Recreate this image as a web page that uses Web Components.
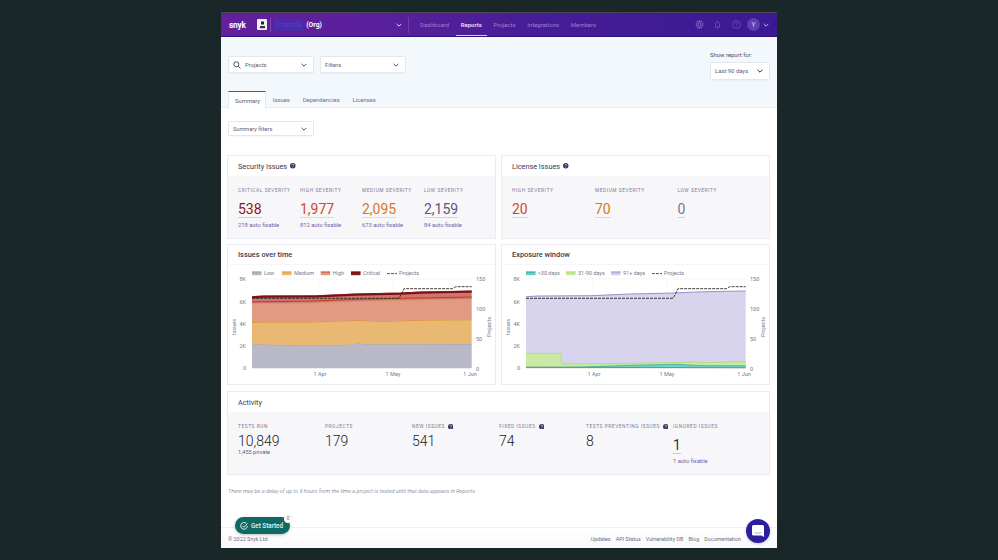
<!DOCTYPE html>
<html lang="en">
<head>
<meta charset="utf-8">
<title>Reports</title>
<style>
html,body{margin:0;height:560px;overflow:hidden;background:#1a2729}
body{display:flex;justify-content:flex-start;padding:13px 0 12px 221px;box-sizing:border-box;font-family:Roboto,"Liberation Sans",sans-serif}
</style>
</head>
<body>
<snyk-app>
  <snyk-nav slot="nav"></snyk-nav>
  <snyk-hero slot="hero"></snyk-hero>
  <snyk-select style="width:86px;height:15px;font-size:5.6px" slot="filter">Summary filters</snyk-select>

  <snyk-card heading="Security Issues" help cols="4" slot="cards">
    <snyk-stat label="Critical severity" value="538" color="#8f1414" line="#e3c9cd" sub="218 auto fixable"></snyk-stat>
    <snyk-stat label="High severity" value="1,977" color="#c9492f" line="#f0d5cf" sub="812 auto fixable"></snyk-stat>
    <snyk-stat label="Medium severity" value="2,095" color="#d67a1c" line="#f3d9cc" sub="673 auto fixable"></snyk-stat>
    <snyk-stat label="Low severity" value="2,159" color="#5a5a7c" line="#d5d2e3" sub="84 auto fixable"></snyk-stat>
  </snyk-card>
  <snyk-card heading="License Issues" help cols="3" wide slot="cards">
    <snyk-stat label="High severity" value="20" color="#c9492f" line="#f0c9c6"></snyk-stat>
    <snyk-stat label="Medium severity" value="70" color="#d67a1c" line="#f0d0cc"></snyk-stat>
    <snyk-stat label="Low severity" value="0" color="#77778f" line="#d5d2e3"></snyk-stat>
  </snyk-card>
  <snyk-card heading="Issues over time" flat slot="cards"><snyk-chart kind="issues"></snyk-chart></snyk-card>
  <snyk-card heading="Exposure window" flat slot="cards"><snyk-chart kind="exposure"></snyk-chart></snyk-card>
  <snyk-card heading="Activity" cols="6" span slot="cards">
    <snyk-stat plain label="Tests run" value="10,849" note="1,455 private"></snyk-stat>
    <snyk-stat plain label="Projects" value="179"></snyk-stat>
    <snyk-stat plain help label="New issues" value="541"></snyk-stat>
    <snyk-stat plain help label="Fixed issues" value="74"></snyk-stat>
    <snyk-stat plain help label="Tests preventing issues" value="8"></snyk-stat>
    <snyk-stat label="Ignored issues" value="1" color="#333" line="#cfccc8" sub="1 auto fixable" drop></snyk-stat>
  </snyk-card>
  <span slot="note">There may be a delay of up to 9 hours from the time a project is tested until that data appears in Reports</span>
  <snyk-footer slot="footer"></snyk-footer>
  <snyk-started slot="overlay"></snyk-started>
  <snyk-chat slot="overlay"></snyk-chat>
</snyk-app>

<script>
const HELP = '<svg width="5.5" height="5.5" viewBox="0 0 12 12" style="flex:none"><circle cx="6" cy="6" r="6" fill="#34345e"/><path d="M4.2 4.7a1.9 1.9 0 1 1 2.7 1.7c-.6.3-.9.6-.9 1.2" fill="none" stroke="#fff" stroke-width="1.3"/><circle cx="6" cy="9.4" r=".8" fill="#fff"/></svg>';
const CHEV = '<svg width="6" height="4" viewBox="0 0 10 6"><path d="M1 1l4 4 4-4" fill="none" stroke="currentColor" stroke-width="1.6"/></svg>';

function define(name, render){
  customElements.define(name, class extends HTMLElement{
    constructor(){ super(); this.attachShadow({mode:'open'}); }
    connectedCallback(){ this.shadowRoot.innerHTML = render(this); }
  });
}

define('snyk-app', () => `<style>
:host{display:flex;flex-direction:column;position:relative;width:556px;height:535px;background:#fff;box-shadow:0 -1px 0 #4a4a50;font-family:Roboto,"Liberation Sans",sans-serif}
.main{flex:1;display:flex;flex-direction:column;padding:13px 7px 0 6px}
.filter{padding-left:1px;height:34px;flex:none}
.cards{display:grid;grid-template-columns:269px 269px;grid-template-rows:84px 141px 85px;gap:5px}
.cards ::slotted(snyk-card[span]){margin-top:1px}
.note{margin:12px 0 0 1px;font:italic 300 5.6px/8px Roboto,sans-serif;color:#60607a}
</style>
<slot name="nav"></slot><slot name="hero"></slot>
<div class="main">
  <div class="filter"><slot name="filter"></slot></div>
  <div class="cards"><slot name="cards"></slot></div>
  <div class="note"><slot name="note"></slot></div>
</div>
<slot name="footer"></slot><slot name="overlay"></slot>`);

define('snyk-nav', () => `<style>
:host{display:flex;align-items:center;height:24px;flex:none;background:linear-gradient(90deg,#651f9c 0,#58209b 30%,#451c96 60%,#3a1a93 100%);color:#fff;border-bottom:1px solid #2c1480;box-sizing:border-box;font:400 6px Roboto,sans-serif}
.logo{font:700 8.2px Roboto,sans-serif;margin-left:8px;width:28px;letter-spacing:-.1px}
.org{width:10px;height:11px;background:#eef0f6;display:flex;align-items:center;justify-content:center;flex:none;border-radius:1px}
.sep{width:1px;height:14px;background:#7a4ab2;margin:0 3px}
.name{display:flex;align-items:center;gap:3px;width:122px;font:700 6.8px Roboto,sans-serif}
.name b{background:#4c2aa8;color:#5a3fc0;padding:2px 1px;font-weight:400}
.chev{color:#e6dcf5;display:flex}
.sep2{width:1px;height:16px;background:#6c3fa8;margin-left:6px}
nav{display:flex;height:100%;margin-left:5px}
nav a{display:flex;align-items:center;padding:0 5px;margin-right:1.7px;color:#9c7ecb;box-sizing:border-box;height:100%}
nav a:first-child{margin-left:1px}
nav a.on{color:#f2ecfa;font-weight:500;border-bottom:1px solid #d8cdf0;}
.icons{margin-left:auto;display:flex;align-items:center;color:#7256b4;padding-right:8px}
.icons svg{display:block}
.av{width:13px;height:13px;border-radius:50%;background:#5c40b0;color:#d9cff0;display:flex;align-items:center;justify-content:center;font-size:6.5px;margin-left:6px;margin-right:3px}
.icons .chev{color:#c9b9ec}
</style>
<span class="logo">snyk</span>
<span class="org"><svg width="7" height="8" viewBox="0 0 7 8"><rect x="2" y="0.5" width="3" height="3" fill="#222"/><rect x="1" y="5" width="5" height="2.2" fill="#333"/></svg></span>
<span class="sep"></span>
<span class="name"><b>Financial</b> (Org)</span>
<span class="chev">${CHEV}</span><span class="sep2"></span>
<nav><a>Dashboard</a><a class="on">Reports</a><a>Projects</a><a>Integrations</a><a>Members</a></nav>
<span class="icons">
<svg width="9" height="9" viewBox="0 0 16 16" fill="none" stroke="currentColor" stroke-width="2"><path d="M8 1l1.3 1.9 2.3-.4.4 2.3L14 6l-.9 2 .9 2-2 1.2-.4 2.3-2.3-.4L8 15l-1.3-1.9-2.3.4-.4-2.3L2 10l.9-2L2 6l2-1.2.4-2.3 2.3.4z"/><circle cx="8" cy="8" r="2.4"/></svg>
<svg style="margin-left:9px" width="9" height="9" viewBox="0 0 16 16" fill="none" stroke="currentColor" stroke-width="1.4"><path d="M3 12.5h10M4.5 12.5V7a3.5 3.5 0 0 1 7 0v5.5M8 1.5v2M6.5 14.5h3"/></svg>
<svg style="margin-left:10px" width="9" height="9" viewBox="0 0 16 16" fill="none" stroke="currentColor" stroke-width="1.3"><circle cx="8" cy="8" r="7"/><path d="M6 6.2a2 2 0 1 1 3 1.7c-.7.4-1 .8-1 1.6M8 11.2v1.2"/></svg>
<span class="av">Y</span><span class="chev">${CHEV}</span>
</span>`);

define('snyk-hero', () => `<style>
:host{display:block;flex:none;height:71px;background:#f3f8fc;border-bottom:1px solid #e9eef3;box-sizing:border-box;padding:0 7px;font-family:Roboto,sans-serif}
.row{display:flex;justify-content:space-between;height:54px;box-sizing:border-box;padding-top:19px}
.left{display:flex;gap:6px;align-items:flex-start}
.right{margin-top:-4px;font:400 5.9px/7px Roboto,sans-serif;color:#4a4a64}
.right span{display:block;margin-bottom:3px}
.tabs{display:flex;height:17px;font:400 5.9px Roboto,sans-serif;color:#71718c}
.tabs a{display:flex;align-items:center;padding:0 6.4px}
.tabs a.on{background:#fff;margin:0 .4px -1px 0;padding:0 6px;border:1px solid #e6e9f0;border-top:1px solid #555a6a;border-bottom:0;box-sizing:border-box;height:18px;width:38px;color:#5c5c76}
</style>
<div class="row">
  <div class="left">
    <snyk-select search style="width:86px;height:17px">Projects</snyk-select>
    <snyk-select style="width:86px;height:17px">Filters</snyk-select>
  </div>
  <div class="right"><span>Show report for:</span><snyk-select style="width:60px;height:18px;padding-left:4px" dark>Last 90 days</snyk-select></div>
</div>
<div class="tabs"><a class="on">Summary</a><a>Issues</a><a>Dependencies</a><a>Licenses</a></div>`);

define('snyk-select', el => `<style>
:host{display:flex;align-items:center;background:#fff;border:1px solid #e4e7ee;border-radius:1.5px;box-sizing:border-box;padding:0 6px 0 4px;font:400 5.9px Roboto,sans-serif;color:#5c5c78;box-shadow:0 1px 1px rgba(60,60,100,.04)}
.t{flex:1;white-space:nowrap}
svg.s{margin-right:4px;color:#444}
.c{color:${el.hasAttribute('dark')?'#222':'#4a3c9c'};display:flex}
</style>
${el.hasAttribute('search')?'<svg class="s" width="8" height="8" viewBox="0 0 12 12" fill="none" stroke="currentColor" stroke-width="1.4"><circle cx="5" cy="5" r="3.8"/><path d="M8 8l3.2 3.2"/></svg>':''}
<span class="t"><slot></slot></span><span class="c">${CHEV}</span>`);

define('snyk-card', el => {
  const cols = el.getAttribute('cols')||1;
  const flat = el.hasAttribute('flat');
  const columns = el.hasAttribute('wide') ? '83px 82.5px 1fr' : (cols==6 ? 'repeat(6,87px)' : `repeat(${cols},62px)`);
  return `<style>
:host{display:flex;flex-direction:column;border:1px solid #ebebf1;box-sizing:border-box;background:#fff;${el.hasAttribute('span')?'grid-column:1 / span 2;':''}min-width:0}
.h{height:20px;flex:none;display:flex;align-items:center;gap:3px;padding-left:10px;font:${flat?'500 7.4px':'400 7.3px'} Roboto,sans-serif;color:#3a3a50;${flat?'border-bottom:1px solid #f6f6f9;':''}box-sizing:border-box}
.b{flex:1;${flat?'':'background:#f7f6f9;'}${flat?'':`display:grid;grid-template-columns:${columns};padding:11px 0 0 10px;align-content:start;`}box-sizing:border-box;min-height:0}
</style><div class="h">${el.getAttribute('heading')}${el.hasAttribute('help')?HELP:''}</div><div class="b"><slot></slot></div>`;
});

define('snyk-stat', el => {
  const g = n => el.getAttribute(n);
  const plain = el.hasAttribute('plain');
  return `<style>
:host{display:block;font-family:Roboto,sans-serif;min-width:0}
.l{display:flex;align-items:center;font:400 4.8px/7px Roboto,sans-serif;letter-spacing:.57px;text-transform:uppercase;color:#7c7c96;white-space:nowrap;height:7px}
.l svg{margin-left:3px}
.w{display:flex}
.v{font:${plain?300:400} 14px/16px Roboto,sans-serif;color:${g('color')||'#1c1c1c'};margin-top:${plain?'3':'7'}px;${g('line')?`border-bottom:1px solid ${g('line')};`:''}}
.s{font:400 5.8px/8px Roboto,sans-serif;color:#6a66b0;margin-top:3px}
.n{font:400 5.6px/6px Roboto,sans-serif;color:#5f5f74}
</style><div class="l">${g('label')}${el.hasAttribute('help')?HELP:''}</div><div class="w"><span class="v">${g('value')}</span></div>${g('note')?`<div class="n">${g('note')}</div>`:''}${g('sub')?`<div class="s">${g('sub')}</div>`:''}`;
});

/* Chart geometry: plot spans x 25-245, y 14 (8K / 150) to 103 (0). Points are given in reference pixels. */
const zx = x => (x/3-3).toFixed(1), zy = y => (y/3-20).toFixed(1);
const line = pts => pts.map(p=>zx(p[0])+' '+zy(p[1])).join(' L');
function band(top, bottom){
  return 'M'+line(top)+' L'+line([...bottom].reverse())+'Z';
}
const BASE=[[84,370],[743,370]];
const CHARTS={
 issues:{
  legend:[['Low','#b5b5c4','#9a9aae',25],['Medium','#e9b873','#dd8f2b',55],['High','#df9a80','#cf4f38',93.7],['Critical','#8e1616','#5c0d0d',124]],
  proj:160,
  areas:()=>{
   const low=[[84,298],[200,300],[370,299],[400,295],[440,298],[743,297]];
   const med=[[84,232],[260,231],[400,226],[470,229],[620,225],[743,224]];
   const high=[[84,175],[260,173],[400,168],[530,165],[743,161]];
   const redl=[[84,170],[260,168],[400,163],[530,160],[743,156]];
   const crit=[[84,155],[120,153],[280,152],[395,147],[530,144],[590,141],[690,139],[743,138]];
   const critl=[[84,157],[120,155],[280,154],[395,149],[530,146],[590,143],[690,141],[743,140]];
   return `<path d="${band(low,BASE)}" fill="#b8b8c6"/><path d="M${line(low)}" fill="none" stroke="#9c9cae" stroke-width=".8"/>
   <path d="${band(med,low)}" fill="#e9b873"/><path d="M${line(med)}" fill="none" stroke="#dd8f2b" stroke-width="1"/>
   <path d="${band(high,med)}" fill="#e09b82"/><path d="M${line(high)}" fill="none" stroke="#e08a34" stroke-width=".8"/>
   <path d="${band(crit,high)}" fill="#d0756c"/><path d="M${line(redl)}" fill="none" stroke="#c63a2c" stroke-width="1.1"/>
   <path d="M${line(critl)}" fill="none" stroke="#7c0f0f" stroke-width="2.2"/><path d="M${line(crit)}" fill="none" stroke="#8e1616" stroke-width=".7"/>`;
  }},
 exposure:{
  legend:[['&lt;30 days','#62cfc0','#35a898',25],['31-90 days','#c4e69a','#a8d873',65],['91+ days','#cfc9ea','#9a8fd0',110]],
  proj:151,
  areas:()=>{
   const top=[[84,155],[120,153],[280,152],[395,147],[530,144],[590,141],[690,139],[743,138]];
   const g=[[84,325],[188,325],[192,357],[400,355],[590,351],[610,353],[743,350]];
   const t=[[84,367],[250,366],[400,361],[530,358],[620,362],[743,362]];
   const t2=[[84,367],[743,368]];
   return `<path d="${band(top,BASE)}" fill="#d8d4ee"/><path d="M${line(top)}" fill="none" stroke="#9a8fd0" stroke-width="1"/>
   <path d="${band(g,BASE)}" fill="#cbe9a4"/><path d="M${line(g)}" fill="none" stroke="#a9dc78" stroke-width=".8"/>
   <path d="${band(t,t2)}" fill="#72d2c4"/><path d="M${line(t)}" fill="none" stroke="#35a898" stroke-width=".7"/>
   <path d="M${line(t2)}" fill="none" stroke="#7d8c8c" stroke-width="1"/>`;
  }}
};
define('snyk-chart', el => {
  const c=CHARTS[el.getAttribute('kind')];
  const grid=[14,36.25,58.5,80.75].map(y=>`<path d="M25 ${y}H245" stroke="#eef0f3" stroke-width=".6"/>`).join('');
  const vgrid=[92,166].map(x=>`<path d="M${x} 14V103" stroke="#f1f2f5" stroke-width=".6"/>`).join('');
  const left=[['8K',14],['6K',36.5],['4K',59],['2K',81],['0',103]].map(t=>`<text x="19" y="${t[1]+2}" text-anchor="end">${t[0]}</text>`).join('');
  const right=[['150',14],['100',44],['50',74],['0',103.5]].map(t=>`<text x="249" y="${t[1]+2}">${t[0]}</text>`).join('');
  const xt=[['1 Apr',93],['1 May',166],['1 Jun',243]].map(t=>`<text x="${t[1]}" y="111" text-anchor="middle">${t[0]}</text>`).join('');
  const leg=c.legend.map(l=>`<rect x="${l[3]}" y="6.6" width="9.5" height="3.6" fill="${l[1]}"/><rect x="${l[3]}" y="6.6" width="9.5" height=".9" fill="${l[2]}"/><text x="${l[3]+12}" y="10.2">${l[0]}</text>`).join('');
  const p=c.proj;
  const projPts=[[84,160],[525,160],[532,148],[540,131],[685,131],[695,125],[743,125]];
  return `<style>:host{display:block}svg{display:block}text{font:400 5.5px Roboto,sans-serif;fill:#77778a}</style>
<svg width="267" height="119" viewBox="1 0 267 119">
  ${grid}${vgrid}
  ${c.areas()}
  <path d="M${line(projPts)}" fill="none" stroke="#2b2b2b" stroke-width=".9" stroke-dasharray="3 1"/>
  ${leg}
  <path d="M${p} 8.6h10" stroke="#444" stroke-width=".9" stroke-dasharray="3 1"/><text x="${p+12}" y="10.2">Projects</text>
  ${left}${right}${xt}
  <text transform="translate(9 62) rotate(-90)" text-anchor="middle">Issues</text>
  <text transform="translate(264 62) rotate(-90)" text-anchor="middle">Projects</text>
</svg>`;
});

define('snyk-footer', () => `<style>
:host{display:flex;flex:none;height:21px;border-top:1px solid #eff0f3;box-sizing:border-box;align-items:center;justify-content:space-between;padding:1px 36px 0 7px;font:400 5.4px Roboto,sans-serif;color:#6c6c84;background:linear-gradient(#fff,#f9f9fb)}
div{display:flex;gap:5px}
</style><span>© 2022 Snyk Ltd.</span><div><a>Updates</a><a>API Status</a><a>Vulnerability DB</a><a>Blog</a><a>Documentation</a></div>`);

define('snyk-started', () => `<style>
:host{position:absolute;left:14px;top:504px;width:55px;height:17px;border-radius:9px;background:#0f6a66;color:#e6f5f2;display:flex;align-items:center;gap:3px;padding-left:5px;box-sizing:border-box;font:500 6.3px Roboto,sans-serif;box-shadow:0 1px 3px rgba(0,0,0,.25)}
i{position:absolute;right:-2px;top:-2px;width:8px;height:8px;border-radius:50%;background:#fff;color:#666;font:400 4.8px/8px Roboto,sans-serif;text-align:center;box-shadow:0 0 1px rgba(0,0,0,.3)}
</style><svg width="8" height="8" viewBox="0 0 12 12" fill="none" stroke="#fff" stroke-width="1.3"><path d="M9.5 2.2A5 5 0 1 0 11 6"/><path d="M3.6 5.6L6 8l5-5.6"/></svg>Get Started<i>0</i>`);

define('snyk-chat', () => `<style>
:host{position:absolute;left:525px;top:506px;width:24px;height:24px;border-radius:50%;background:#2d1ea0;display:flex;align-items:center;justify-content:center;box-shadow:0 1px 3px rgba(0,0,0,.2)}
</style><svg width="12" height="12" viewBox="0 0 12 12"><path d="M1.5 0h9A1.5 1.5 0 0 1 12 1.5V12l-2.5-1.5h-8A1.5 1.5 0 0 1 0 9V1.5A1.5 1.5 0 0 1 1.5 0z" fill="#fff"/><path d="M2.5 7.5c2 1 5 1 7 0" stroke="#8a84c8" stroke-width=".7" fill="none"/></svg>`);
</script>
</body>
</html>
